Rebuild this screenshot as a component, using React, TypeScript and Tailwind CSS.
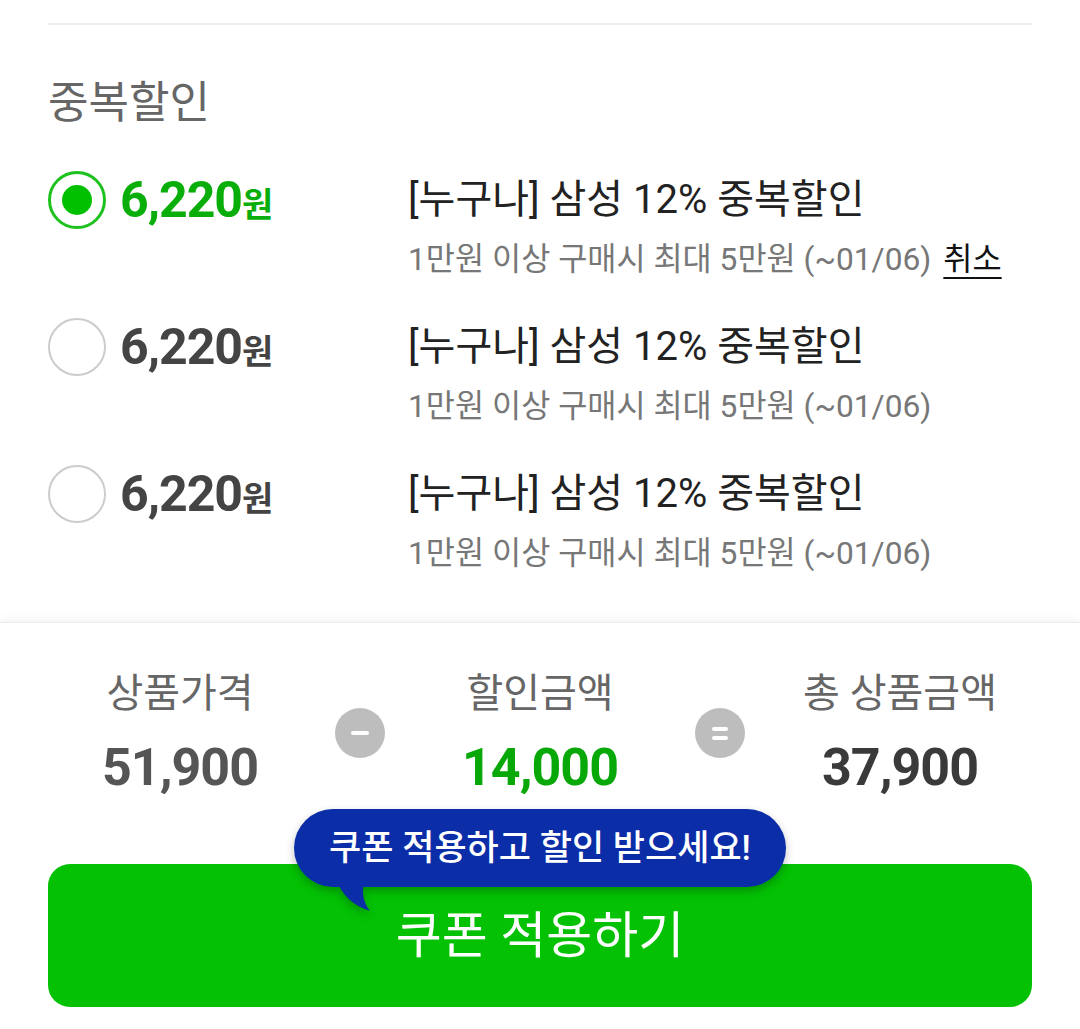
import React from "react";

const KR = { fontFamily: 'Roboto, "Noto Sans CJK KR", sans-serif' };

function Radio({ checked }: { checked: boolean }) {
  return checked ? (
    <div className="w-[58px] h-[58px] rounded-full border-[3px] border-[#1ec21e] flex items-center justify-center shrink-0">
      <div className="w-[30px] h-[30px] rounded-full bg-[#00c000]" />
    </div>
  ) : (
    <div className="w-[58px] h-[58px] rounded-full border-[2.5px] border-[#cccccc] shrink-0" />
  );
}

function Row({ checked }: { checked: boolean }) {
  return (
    <div className="flex items-start">
      <div className="w-[360px] h-[58px] flex items-center gap-[14px] shrink-0">
        <Radio checked={checked} />
        <div
          className={`flex items-baseline font-bold ${checked ? "text-[#0aae0a]" : "text-[#444444]"}`}
        >
          <span className="text-[50px] tracking-[-1px] leading-none">6,220</span>
          <span className="text-[34px] leading-none">원</span>
        </div>
      </div>
      <div className="flex flex-col">
        <div className="text-[40px] leading-[58px] text-[#222222] whitespace-nowrap">[누구나] 삼성 12% 중복할인</div>
        <div className="mt-[11px] text-[31.7px] leading-[40px] text-[#777777] whitespace-nowrap">
          1만원 이상 구매시 최대 5만원 (~01/06)
          {checked && (
            <span className="ml-[12px] text-[#111111] underline underline-offset-[7px] decoration-[2px]">취소</span>
          )}
        </div>
      </div>
    </div>
  );
}

function Sign({ kind }: { kind: "minus" | "eq" }) {
  return (
    <div className="w-[50px] h-[50px] rounded-full bg-[#bdbdbd] flex flex-col items-center justify-center gap-[5px]">
      {kind === "minus" ? (
        <div className="w-[18px] h-[4px] rounded-full bg-white" />
      ) : (
        <>
          <div className="w-[16px] h-[4px] rounded-full bg-white" />
          <div className="w-[16px] h-[4px] rounded-full bg-white" />
        </>
      )}
    </div>
  );
}

function Stat({ label, value, color }: { label: string; value: string; color: string }) {
  return (
    <div className="flex flex-col items-center">
      <div className="text-[40px] leading-[50px] text-[#666666] whitespace-nowrap">{label}</div>
      <div className={`mt-[20px] text-[52px] leading-[58px] font-bold tracking-[-1px] whitespace-nowrap ${color}`}>{value}</div>
    </div>
  );
}

export default function App() {
  return (
    <div className="w-[1080px] h-[1029px] bg-white overflow-hidden flex flex-col" style={KR}>
      <div className="px-[48px] pt-[23px]">
        <div className="h-[2px] bg-[#eeeeee]" />
        <div className="mt-[54px] text-[44px] leading-[48px] text-[#666666]">중복할인</div>
        <div className="mt-[44px] flex flex-col gap-[38px]">
          <Row checked />
          <Row checked={false} />
          <Row checked={false} />
        </div>
      </div>
      <div className="mt-[48px] flex-1 border-t border-[#ececec] shadow-[0_-3px_8px_rgba(0,0,0,0.05)] pt-[46px] px-[48px] pb-[23px] flex flex-col">
        <div className="mx-[42px] grid grid-cols-5 items-center">
          <Stat label="상품가격" value="51,900" color="text-[#555555]" />
          <div className="flex justify-center">
            <Sign kind="minus" />
          </div>
          <Stat label="할인금액" value="14,000" color="text-[#08a808]" />
          <div className="flex justify-center">
            <Sign kind="eq" />
          </div>
          <Stat label="총 상품금액" value="37,900" color="text-[#3a3a3a]" />
        </div>
        <div className="relative mt-[67px]">
          <button className="w-full h-[143px] rounded-[22px] bg-[#04c104] text-white text-[50px] leading-none flex items-center justify-center">
            쿠폰 적용하기
          </button>
          <div className="absolute left-[246px] top-[-55px] w-[492px] h-[78px] drop-shadow-[0_4px_4px_rgba(0,0,0,0.25)]">
            <div className="relative w-full h-full rounded-full bg-[#0b2ea8] flex items-center justify-center text-white text-[35px] font-medium leading-none whitespace-nowrap">
              쿠폰 적용하고 할인 받으세요!
              <svg className="absolute left-[40px] top-[70px]" width="42" height="38" viewBox="0 0 42 38">
                <path d="M2 0 C 8 16, 18 26, 36 32 C 29 23, 27 12, 31 0 Z" fill="#0b2ea8" />
              </svg>
            </div>
          </div>
        </div>
      </div>
    </div>
  );
}
